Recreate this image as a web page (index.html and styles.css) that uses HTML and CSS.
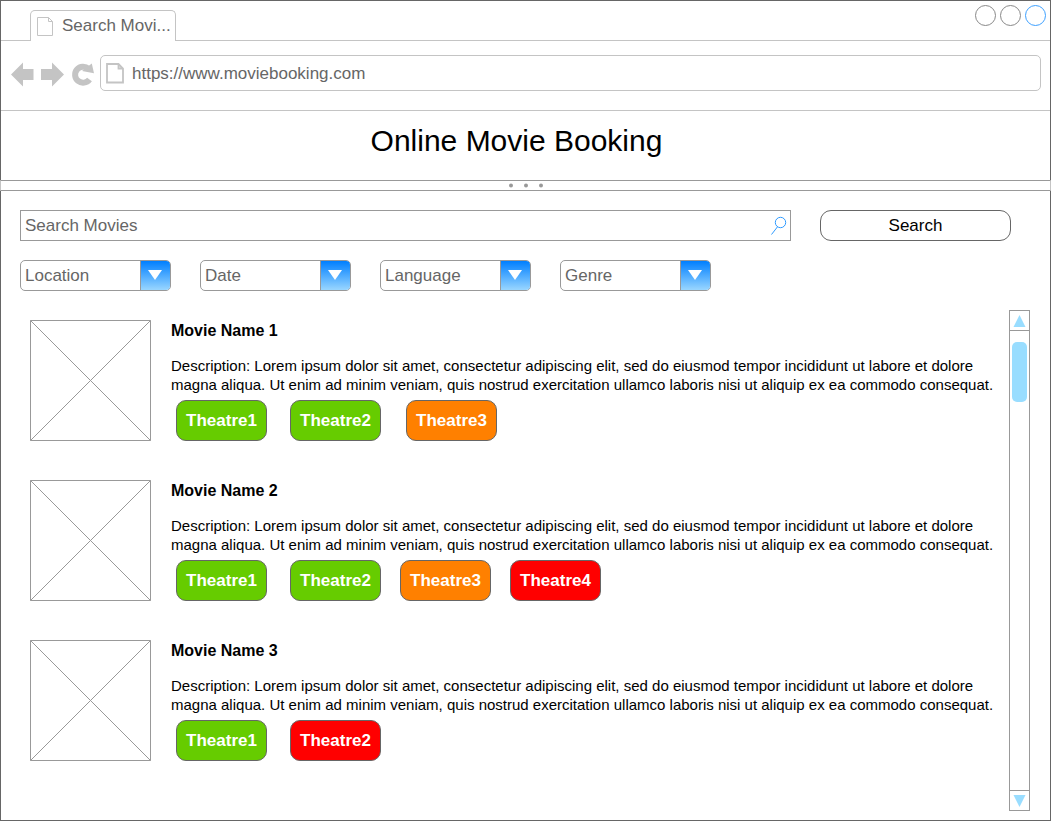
FILE: index.html
```html
<!DOCTYPE html>
<html lang="en">
<head>
<meta charset="utf-8">
<title>Online Movie Booking</title>
<link rel="stylesheet" href="styles.css">
</head>
<body>
<div class="window">
  <div class="tab-strip">
    <div class="tab">
      <svg class="tab-icon" width="17" height="20" viewBox="0 0 17 20"><path d="M.5 .5h11l4 4v14h-15zM11.500 .5v4h4" fill="none" stroke="#c4c4c4"/></svg>
      <span>Search Movi...</span>
    </div>
    <svg class="controls" width="72" height="22" viewBox="0 0 72 22" fill="none">
      <circle cx="11.500" cy="10.500" r="10" stroke="#888"/><circle cx="36.500" cy="10.500" r="10" stroke="#888"/><circle cx="61.500" cy="10.500" r="10" stroke="#3da0ff"/>
    </svg>
  </div>
  <div class="toolbar">
    <svg class="nav" width="84" height="28" viewBox="0 0 84 28" fill="#c4c4c4">
      <path d="M0 13.500L12 1.500V8H22.500v11H12v6.500z"/>
      <path d="M53 13.500L41 1.500V8H30v11h11v6.500z"/>
      <path d="M77.500 7.800A8 8 0 1 0 78.500 18.500" fill="none" stroke="#c4c4c4" stroke-width="6"/>
      <path d="M71 10L80.800 2.500 83 12.300z"/>
    </svg>
    <div class="address">
      <svg width="18" height="21" viewBox="0 0 18 21"><path d="M1 1h11.500l4.500 4.500V19.500H1zM12.500 1v4.500h4.500" fill="none" stroke="#c4c4c4" stroke-width="1.800"/></svg>
      <span class="url">https://www.moviebooking.com</span>
    </div>
  </div>
  <h1 class="title">Online Movie Booking</h1>
  <div class="splitter"><svg width="36" height="5" fill="#999"><circle cx="3" cy="2.500" r="2"/><circle cx="18" cy="2.500" r="2"/><circle cx="33" cy="2.500" r="2"/></svg></div>
  <div class="search-row">
    <div class="search-field"><span>Search Movies</span>
      <svg width="16" height="20" viewBox="0 0 16 20" fill="none" stroke="#2f9bff"><circle cx="9.500" cy="6.500" r="5.200"/><path d="M6.500 10.800L.5 18.500"/></svg>
    </div>
    <div class="search-button">Search</div>
  </div>
  <div class="filters">
    <div class="select"><span>Location</span><b><svg width="14" height="10"><path d="M0 0h14L7 10z" fill="#fff"/></svg></b></div>
    <div class="select"><span>Date</span><b><svg width="14" height="10"><path d="M0 0h14L7 10z" fill="#fff"/></svg></b></div>
    <div class="select"><span>Language</span><b><svg width="14" height="10"><path d="M0 0h14L7 10z" fill="#fff"/></svg></b></div>
    <div class="select"><span>Genre</span><b><svg width="14" height="10"><path d="M0 0h14L7 10z" fill="#fff"/></svg></b></div>
  </div>
  <div class="results">
    <div class="movies">
      <div class="movie">
        <svg class="poster" width="121" height="121" viewBox="0 0 121 121" fill="none" stroke="#999"><path d="M.5 .5h120v120H.5z"/><path d="M.5 .5l120 120M120.500 .5l-120 120"/></svg>
        <div class="info">
          <h2>Movie Name 1</h2>
          <p>Description: Lorem ipsum dolor sit amet, consectetur adipiscing elit, sed do eiusmod tempor incididunt ut labore et dolore<br>magna aliqua. Ut enim ad minim veniam, quis nostrud exercitation ullamco laboris nisi ut aliquip ex ea commodo consequat.</p>
          <div class="theatres"><span class="theatre green">Theatre1</span><span class="theatre green">Theatre2</span><span class="theatre orange wide-gap">Theatre3</span></div>
        </div>
      </div>
      <div class="movie">
        <svg class="poster" width="121" height="121" viewBox="0 0 121 121" fill="none" stroke="#999"><path d="M.5 .5h120v120H.5z"/><path d="M.5 .5l120 120M120.500 .5l-120 120"/></svg>
        <div class="info">
          <h2>Movie Name 2</h2>
          <p>Description: Lorem ipsum dolor sit amet, consectetur adipiscing elit, sed do eiusmod tempor incididunt ut labore et dolore<br>magna aliqua. Ut enim ad minim veniam, quis nostrud exercitation ullamco laboris nisi ut aliquip ex ea commodo consequat.</p>
          <div class="theatres"><span class="theatre green">Theatre1</span><span class="theatre green">Theatre2</span><span class="theatre orange">Theatre3</span><span class="theatre red">Theatre4</span></div>
        </div>
      </div>
      <div class="movie">
        <svg class="poster" width="121" height="121" viewBox="0 0 121 121" fill="none" stroke="#999"><path d="M.5 .5h120v120H.5z"/><path d="M.5 .5l120 120M120.500 .5l-120 120"/></svg>
        <div class="info">
          <h2>Movie Name 3</h2>
          <p>Description: Lorem ipsum dolor sit amet, consectetur adipiscing elit, sed do eiusmod tempor incididunt ut labore et dolore<br>magna aliqua. Ut enim ad minim veniam, quis nostrud exercitation ullamco laboris nisi ut aliquip ex ea commodo consequat.</p>
          <div class="theatres"><span class="theatre green">Theatre1</span><span class="theatre red">Theatre2</span></div>
        </div>
      </div>
    </div>
    <div class="scrollbar">
      <div class="arrow up"><svg width="13" height="12"><path d="M.5 12L6.500 0l6 12z" fill="#99ddff"/></svg></div>
      <div class="track"><div class="thumb"></div></div>
      <div class="arrow down"><svg width="13" height="12"><path d="M.5 0h12L6.500 12z" fill="#99ddff"/></svg></div>
    </div>
  </div>
</div>
</body>
</html>
```
FILE: styles.css
```css
* { box-sizing: border-box; }
body { margin: 0; background: #fff; font-family: "Liberation Sans", Arial, sans-serif; color: #000; }
svg { flex: none; }
.window { width: 1051px; height: 821px; border: 1px solid #666; display: flex; flex-direction: column; font-size: 17px; }
.tab-strip { height: 40px; border-bottom: 1px solid #c4c4c4; display: flex; justify-content: space-between; padding: 0 4px 0 29px; flex: none; }
.tab { width: 146px; height: 31px; margin-top: 9px; border: 1px solid #c4c4c4; border-bottom: 0; border-radius: 5px 5px 0 0; background: #fff; display: flex; align-items: center; padding: 0 0 0 6px; color: #666; white-space: nowrap; }
.tab-icon { margin: 2px 8px 0 0; }
.controls { margin-top: 4px; }
.toolbar { height: 70px; flex: none; border-bottom: 1px solid #c4c4c4; display: flex; padding: 14px 9px 0 10px; }
.nav { margin: 6px 5px 0 0; }
.address { width: 941px; height: 36px; flex: none; border: 1px solid #c4c4c4; border-radius: 5px; display: flex; align-items: center; gap: 8px; padding: 1px 0 0 5px; color: #666; }
.url { padding-top: 1px; }
.title { margin: 0; height: 69px; flex: none; font-size: 30px; font-weight: 400; line-height: 34px; padding: 13px 18px 0 0; text-align: center; }
.splitter { height: 11px; margin: 0 -1px; flex: none; border: 1px solid #999; border-left-color: #c4c4c4; border-right-color: #c4c4c4; background: #fff; display: flex; justify-content: center; padding-top: 2px; }
.search-row { display: flex; gap: 29px; padding: 19px 0 0 19px; flex: none; }
.search-field { width: 771px; height: 31px; border: 1px solid #999; display: flex; align-items: center; justify-content: space-between; padding: 0 3px 0 4px; color: #666; }
.search-button { width: 191px; height: 31px; border: 1px solid #666; border-radius: 11px; display: flex; align-items: center; justify-content: center; }
.filters { display: flex; gap: 29px; padding: 19px 0 0 19px; flex: none; }
.select { width: 151px; height: 31px; border: 1px solid #999; border-radius: 5px; overflow: hidden; display: flex; align-items: center; justify-content: space-between; padding-left: 4px; color: #666; }
.select b { width: 30px; height: 29px; border-left: 1px solid #999; background: linear-gradient(#007fff, #99d6ff); display: flex; align-items: flex-start; padding: 9px 0 0 7px; }
.results { display: flex; justify-content: space-between; padding: 19px 20px 0 29px; flex: none; }
.movies { display: flex; flex-direction: column; gap: 39px; padding-top: 10px; }
.movie { display: flex; gap: 20px; height: 121px; }
.info { white-space: nowrap; }
.info h2 { margin: 0; font-size: 16px; line-height: 18px; padding-top: 2px; }
.info p { margin: 16px 0 0; font-size: 15px; line-height: 19px; height: 44px; }
.theatres { display: flex; padding-left: 5px; }
.theatre { width: 91px; height: 41px; border: 1px solid #666; border-radius: 10px; color: #fff; font-weight: 700; display: flex; align-items: center; justify-content: center; margin-right: 19px; }
.theatre:first-child { margin-right: 23px; }
.wide-gap { margin-left: 6px; }
.green { background: #66cc00; }
.orange { background: #ff8000; }
.red { background: #ff0000; }
.scrollbar { width: 21px; height: 501px; border: 1px solid #999; display: flex; flex-direction: column; }
.arrow { height: 20px; flex: none; display: flex; align-items: center; padding-left: 3px; }
.up { border-bottom: 1px solid #999; }
.down { border-top: 1px solid #999; }
.track { flex: 1; padding: 11px 2px 0 2px; }
.thumb { width: 15px; height: 60px; border-radius: 5px; background: #99ddff; }
```
